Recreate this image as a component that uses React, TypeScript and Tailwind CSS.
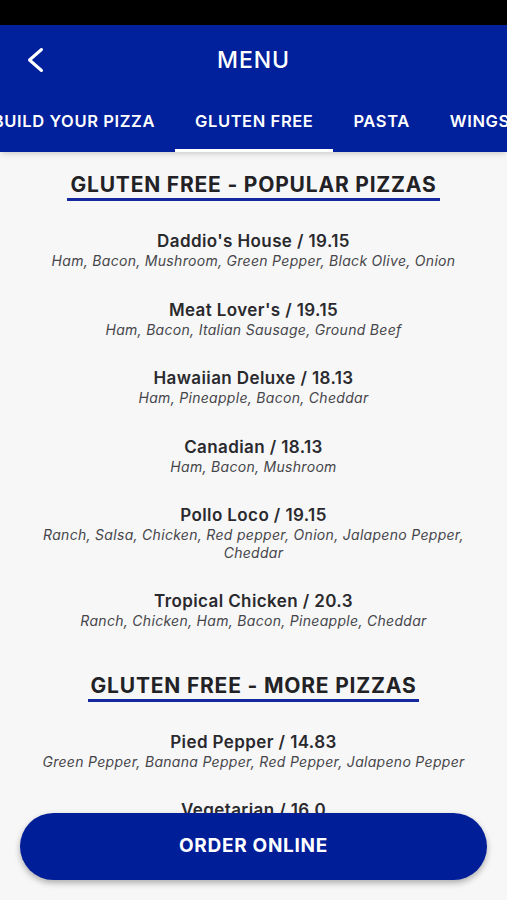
const popular = [
  { name: "Daddio's House / 19.15", toppings: "Ham, Bacon, Mushroom, Green Pepper, Black Olive, Onion" },
  { name: "Meat Lover's / 19.15", toppings: "Ham, Bacon, Italian Sausage, Ground Beef" },
  { name: "Hawaiian Deluxe / 18.13", toppings: "Ham, Pineapple, Bacon, Cheddar" },
  { name: "Canadian / 18.13", toppings: "Ham, Bacon, Mushroom" },
  { name: "Pollo Loco / 19.15", toppings: "Ranch, Salsa, Chicken, Red pepper, Onion, Jalapeno Pepper, Cheddar" },
  { name: "Tropical Chicken / 20.3", toppings: "Ranch, Chicken, Ham, Bacon, Pineapple, Cheddar" },
];

const more = [
  { name: "Pied Pepper / 14.83", toppings: "Green Pepper, Banana Pepper, Red Pepper, Jalapeno Pepper" },
  { name: "Vegetarian / 16.0", toppings: "Green Pepper, Mushroom, Onion, Black Olive, Tomato" },
];

const tabs = ["GLUTEN FREE", "PASTA", "WINGS"];

function Section({ title, items, first }: { title: string; items: { name: string; toppings: string }[]; first?: boolean }) {
  return (
    <section className={first ? "pt-[21px]" : "pt-[44px]"}>
      <div className="flex justify-center">
        <h2 className="border-b-[3px] border-[#1428a0] px-[3px] pb-[1px] text-[21px] leading-[24px] font-bold tracking-[0.8px] text-[#222226]">
          {title}
        </h2>
      </div>
      <div className="mt-[30px] flex flex-col gap-[30px] px-[36px]">
        {items.map((item) => (
          <div key={item.name} className="text-center">
            <div className="text-[17px] leading-[21px] font-semibold tracking-[0.4px] text-[#2a2a2e]">{item.name}</div>
            <div className="text-[14px] leading-[17.5px] tracking-[0.3px] italic text-[#46464a]">{item.toppings}</div>
          </div>
        ))}
      </div>
    </section>
  );
}

export default function App() {
  return (
    <div className="relative h-[900px] w-[507px] overflow-hidden bg-[#f7f7f8] font-['Inter',sans-serif]">
      <div className="h-[25px] bg-black" />
      <header className="relative z-10 bg-[#00209c] shadow-md">
        <div className="grid h-[70px] grid-cols-[1fr_auto_1fr] items-center">
          <div className="pl-[22px]">
            <svg width="24" height="28" viewBox="0 0 24 28" fill="none" stroke="white" strokeWidth="3" strokeLinecap="round" strokeLinejoin="round">
              <path d="M19.5 3.5 L7.5 14 L19.5 24.5" />
            </svg>
          </div>
          <h1 className="text-[23px] font-medium tracking-[0.9px] text-white">MENU</h1>
          <div />
        </div>
        <nav className="flex h-[57px] overflow-hidden whitespace-nowrap text-[16.5px] font-semibold tracking-[0.6px] text-white">
          <div className="flex w-[175px] shrink-0 justify-end overflow-hidden">
            <div className="flex shrink-0 items-center px-[20px] pb-[4px]">BUILD YOUR PIZZA</div>
          </div>
          {tabs.map((t) => (
            <div
              key={t}
              className={
                "flex shrink-0 items-center px-[20px] " +
                (t === "GLUTEN FREE" ? "border-b-[3px] border-white pb-[1px]" : "pb-[4px]")
              }
            >
              {t}
            </div>
          ))}
        </nav>
      </header>

      <main className="pb-[120px]">
        <Section title="GLUTEN FREE - POPULAR PIZZAS" items={popular} first />
        <Section title="GLUTEN FREE - MORE PIZZAS" items={more} />
      </main>

      <button className="absolute right-[20px] bottom-[20px] left-[20px] h-[67px] rounded-full bg-[#001e98] text-[19px] font-bold tracking-[0.7px] text-white shadow-[0_3px_6px_rgba(0,0,0,0.3)]">
        ORDER ONLINE
      </button>
    </div>
  );
}
